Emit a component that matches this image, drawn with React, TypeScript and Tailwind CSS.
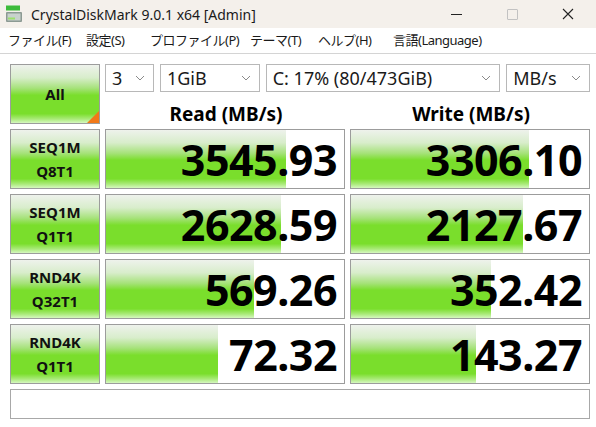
import React from "react";

const green =
  "bg-[linear-gradient(to_bottom,#eef2ec_0%,#d8edcb_22%,#a6e27a_40%,#7ade2c_52%,#7ade2c_84%,#a9ea78_93%,#d6f7c0_100%)]";

const rows = [
  { a: "SEQ1M", b: "Q8T1", read: "3545.93", rf: 180, write: "3306.10", wf: 178 },
  { a: "SEQ1M", b: "Q1T1", read: "2628.59", rf: 175, write: "2127.67", wf: 172 },
  { a: "RND4K", b: "Q32T1", read: "569.26", rf: 148, write: "352.42", wf: 140 },
  { a: "RND4K", b: "Q1T1", read: "72.32", rf: 112, write: "143.27", wf: 125 },
];

const menus = [
  { t: "ファイル(F)", w: "w-[78px]" },
  { t: "設定(S)", w: "w-[64px]" },
  { t: "プロファイル(P)", w: "w-[100px]" },
  { t: "テーマ(T)", w: "w-[68px]" },
  { t: "ヘルプ(H)", w: "w-[75px]" },
  { t: "言語(Language)", w: "w-[110px]" },
];

const Chevron = () => (
  <svg width="10" height="6" viewBox="0 0 10 6" className="shrink-0">
    <path d="M1 1l4 4 4-4" fill="none" stroke="#8a8a8a" strokeWidth="1" />
  </svg>
);

const Combo = ({ text, className }: { text: string; className: string }) => (
  <div
    className={`flex items-center justify-between h-[28px] border border-[#b8b8b8] bg-white pl-[6px] pr-[8px] text-[18px] text-[#1a1a1a] ${className}`}
  >
    <span className="leading-none">{text}</span>
    <Chevron />
  </div>
);

const Value = ({ value, fill }: { value: string; fill: number }) => (
  <div className="relative h-[60px] border border-[#9c9c9c] bg-white overflow-hidden">
    <div className={`absolute left-0 top-0 bottom-0 ${green}`} style={{ width: fill }} />
    <div className="relative h-full flex items-center justify-end pr-[7px] text-[43px] font-bold leading-none text-black tracking-[-0.5px]">
      {value}
    </div>
  </div>
);

export default function App() {
  return (
    <div className="w-[596px] h-[427px] bg-white overflow-hidden font-['Noto_Sans','Noto_Sans_CJK_JP',sans-serif]">
      {/* title bar */}
      <div className="h-[28px] bg-[#f4f0eb] flex items-center">
        <svg width="18" height="18" viewBox="0 0 18 18" className="ml-[5px]">
          <rect x="1" y="0.5" width="14" height="5" fill="#3dbb3a" />
          <rect x="1" y="7" width="16" height="10" rx="1" fill="#8c9a93" />
          <rect x="2.5" y="8.5" width="13" height="7" fill="#c8d2cd" />
          <rect x="3" y="12.5" width="7" height="2" fill="#9be06c" />
        </svg>
        <span className="ml-[8px] text-[14px] text-[#1a1a1a]">CrystalDiskMark 9.0.1 x64 [Admin]</span>
        <div className="ml-auto flex items-center h-full">
          <div className="w-[56px] flex justify-center">
            <div className="w-[11px] h-[1px] bg-[#222]" />
          </div>
          <div className="w-[56px] flex justify-center">
            <div className="w-[11px] h-[11px] border border-[#c2c2c2] rounded-[1px]" />
          </div>
          <div className="w-[56px] flex justify-center">
            <svg width="12" height="12" viewBox="0 0 12 12">
              <path d="M1 1l10 10M11 1L1 11" stroke="#222" strokeWidth="1.1" />
            </svg>
          </div>
        </div>
      </div>
      {/* menu bar */}
      <div className="h-[26px] flex items-center border-b border-[#d4d4d4] pl-[8px] text-[13px] tracking-[-0.5px] text-[#1a1a1a]">
        {menus.map((m) => (
          <span key={m.t} className={`${m.w} shrink-0 whitespace-nowrap`}>
            {m.t}
          </span>
        ))}
      </div>

      {/* main */}
      <div className="px-[10px] pt-[10px] grid grid-cols-[90px_240px_240px] gap-x-[5px] gap-y-[5px]">
        <div
          className={`relative h-[60px] border border-[#9c9c9c] ${green} flex items-center justify-center text-[15px] font-bold text-[#111]`}
        >
          All
          <div className="absolute right-0 bottom-0 w-0 h-0 border-l-[12px] border-l-transparent border-b-[12px] border-b-[#f07818]" />
        </div>
        <div className="col-span-2 flex flex-col">
          <div className="flex gap-[6px]">
            <Combo text="3" className="w-[49px]" />
            <Combo text="1GiB" className="w-[100px]" />
            <Combo text="C: 17% (80/473GiB)" className="w-[235px]" />
            <Combo text="MB/s" className="w-[84px]" />
          </div>
          <div className="flex-1 grid grid-cols-2 gap-x-[5px] items-end text-[19px] font-bold leading-none text-black">
            <div className="text-center pl-[2px]">Read (MB/s)</div>
            <div className="text-center pl-[2px]">Write (MB/s)</div>
          </div>
        </div>

        {rows.map((r, i) => (
          <React.Fragment key={i}>
            <div
              className={`h-[60px] border border-[#9c9c9c] ${green} flex flex-col items-center justify-center text-[15px] font-bold leading-[24px] text-[#111]`}
            >
              <span>{r.a}</span>
              <span>{r.b}</span>
            </div>
            <Value value={r.read} fill={r.rf} />
            <Value value={r.write} fill={r.wf} />
          </React.Fragment>
        ))}

        <div className="col-span-3 h-[30px] border border-[#a8a8a8] bg-white" />
      </div>
    </div>
  );
}
